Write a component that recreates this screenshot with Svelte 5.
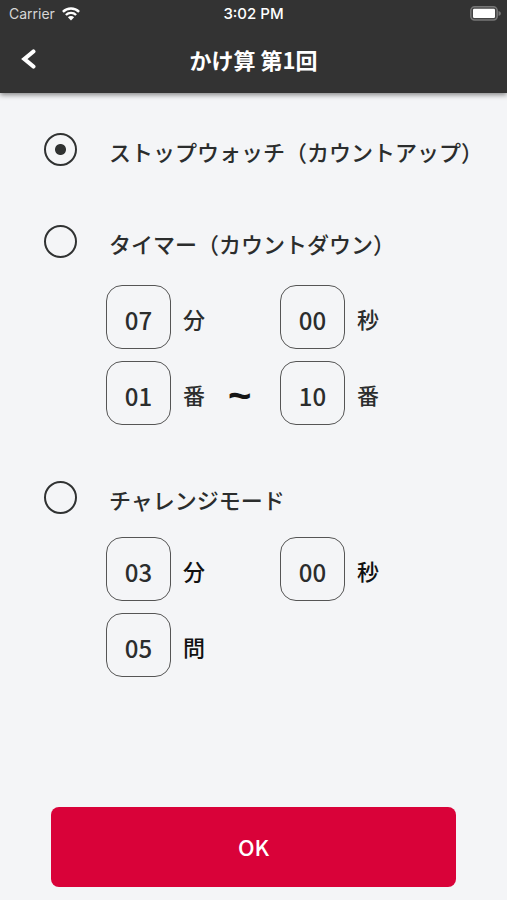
<script>
  let mode = $state('stopwatch');
  let timer = $state({ minutes: '07', seconds: '00', from: '01', to: '10' });
  let challenge = $state({ minutes: '03', seconds: '00', questions: '05' });
</script>

<div class="screen" lang="ja">
  <header>
    <div class="status">
      <div class="carrier">
        <span>Carrier</span>
        <svg width="18" height="14" viewBox="0 0 18 14" aria-hidden="true">
          <g fill="none" stroke="#fff" stroke-width="2.4">
            <path d="M0.9 4.8a11.5 11.5 0 0 1 16.2 0" />
            <path d="M3.9 8a7.2 7.2 0 0 1 10.2 0" />
          </g>
          <path d="M5.9 10.3a4.4 4.4 0 0 1 6.2 0L9 13.5z" fill="#fff" />
        </svg>
      </div>
      <span class="time">3:02 PM</span>
      <svg class="battery" width="31" height="15" viewBox="0 0 31 15" aria-hidden="true">
        <rect x="0.8" y="0.8" width="26.4" height="13.2" rx="3.8" fill="#444" stroke="#777" stroke-width="1.5" />
        <rect x="3" y="2.8" width="22" height="9.2" rx="1.2" fill="#fff" />
        <path d="M28.5 5c1.6.5 2.4 1.3 2.4 2.4s-.8 1.9-2.4 2.4z" fill="#777" />
      </svg>
    </div>
    <div class="nav">
      <button class="back" type="button" aria-label="戻る">
        <svg width="16" height="20" viewBox="0 0 16 20" aria-hidden="true">
          <path d="M12.4 2.5L3.4 10l9 7.5" fill="none" stroke="#fff" stroke-width="4.2" stroke-linecap="round" stroke-linejoin="miter" />
        </svg>
      </button>
      <h1>かけ算 第1回</h1>
    </div>
  </header>

  <main>
    <section>
      <div class="option">
        <input type="radio" id="stopwatch" name="mode" value="stopwatch" bind:group={mode} />
        <label for="stopwatch">ストップウォッチ（カウントアップ）</label>
      </div>
    </section>

    <section>
      <div class="option">
        <input type="radio" id="timer" name="mode" value="timer" bind:group={mode} />
        <label for="timer">タイマー（カウントダウン）</label>
      </div>
      <div class="fields">
        <div class="field">
          <input type="text" inputmode="numeric" id="t-min" bind:value={timer.minutes} />
          <label for="t-min">分</label>
        </div>
        <div class="field">
          <input type="text" inputmode="numeric" id="t-sec" bind:value={timer.seconds} />
          <label for="t-sec">秒</label>
        </div>
        <div class="field">
          <input type="text" inputmode="numeric" id="t-from" bind:value={timer.from} />
          <label for="t-from">番</label>
          <span class="tilde">~</span>
        </div>
        <div class="field">
          <input type="text" inputmode="numeric" id="t-to" bind:value={timer.to} />
          <label for="t-to">番</label>
        </div>
      </div>
    </section>

    <section class="challenge">
      <div class="option">
        <input type="radio" id="challenge" name="mode" value="challenge" bind:group={mode} />
        <label for="challenge">チャレンジモード</label>
      </div>
      <div class="fields">
        <div class="field">
          <input type="text" inputmode="numeric" id="c-min" bind:value={challenge.minutes} />
          <label for="c-min">分</label>
        </div>
        <div class="field">
          <input type="text" inputmode="numeric" id="c-sec" bind:value={challenge.seconds} />
          <label for="c-sec">秒</label>
        </div>
        <div class="field">
          <input type="text" inputmode="numeric" id="c-num" bind:value={challenge.questions} />
          <label for="c-num">問</label>
        </div>
      </div>
    </section>
  </main>

  <footer>
    <button class="ok" type="button">OK</button>
  </footer>
</div>

<style>
  :global(body) {
    background: #f4f5f7;
  }

  .screen {
    display: flex;
    flex-direction: column;
    box-sizing: border-box;
    min-height: 100vh;
    background: #f4f5f7;
    color: #2b2d2d;
    font-family: 'Noto Sans CJK JP', sans-serif;
  }

  header {
    background: #333;
    color: #fff;
    box-shadow: 0 2px 5px rgba(0, 0, 0, 0.45);
  }

  .status {
    display: grid;
    grid-template-columns: 1fr auto 1fr;
    align-items: center;
    height: 27px;
    padding: 0 6px;
    font-family: Inter, sans-serif;
    font-size: 14px;
  }

  .carrier {
    display: flex;
    align-items: center;
    gap: 7px;
    padding-left: 3px;
    color: #d6d6d6;
  }

  .time {
    font-size: 15px;
    font-weight: 500;
  }

  .battery {
    justify-self: end;
  }

  .nav {
    display: grid;
    grid-template-columns: 56px 1fr 56px;
    align-items: center;
    height: 64px;
    padding-bottom: 2px;
  }

  .back {
    display: flex;
    align-items: center;
    height: 44px;
    padding: 0 0 0 21px;
    border: 0;
    background: none;
  }

  h1 {
    margin: 0;
    font-size: 22px;
    font-weight: 700;
    line-height: 32px;
    text-align: center;
  }

  main {
    flex: 1;
    display: flex;
    flex-direction: column;
    gap: 52px;
    padding: 36px 0 40px 44px;
  }

  .option {
    display: flex;
    align-items: center;
    gap: 32px;
    height: 40px;
    font-size: 22px;
    font-weight: 500;
  }

  .option label {
    padding-top: 4px;
    line-height: 32px;
    white-space: nowrap;
  }

  input[type='radio'] {
    flex: none;
    appearance: none;
    width: 33px;
    height: 33px;
    margin: 0;
    border: 2px solid #303232;
    border-radius: 50%;
  }

  input[type='radio']:checked {
    background: radial-gradient(circle, #303232 5px, transparent 6px);
  }

  .fields {
    display: grid;
    grid-template-columns: 174px 174px;
    row-gap: 12px;
    padding: 24px 0 0 62px;
  }

  .challenge .fields {
    padding-top: 20px;
  }

  .field {
    display: flex;
    align-items: center;
    font-size: 22px;
    font-weight: 500;
  }

  .field input {
    box-sizing: border-box;
    width: 65px;
    height: 64px;
    padding: 4px 0 0;
    border: 1px solid #555;
    border-radius: 16px;
    background: transparent;
    color: inherit;
    font: inherit;
    font-size: 24px;
    text-align: center;
  }

  .field label {
    padding: 2px 0 0 12px;
  }

  .challenge .field label {
    color: #111;
  }

  .tilde {
    padding: 4px 0 0 23px;
    color: #151515;
    font-family: 'Liberation Sans', sans-serif;
    font-size: 40px;
    font-weight: 700;
    line-height: 44px;
  }

  footer {
    padding: 0 0 13px;
    text-align: center;
  }

  .ok {
    width: 80%;
    height: 80px;
    padding: 0 0 2px;
    border: 0;
    border-radius: 8px;
    background: #d90239;
    color: #fff;
    font: 500 22px/32px 'Noto Sans CJK JP', sans-serif;
  }
</style>
